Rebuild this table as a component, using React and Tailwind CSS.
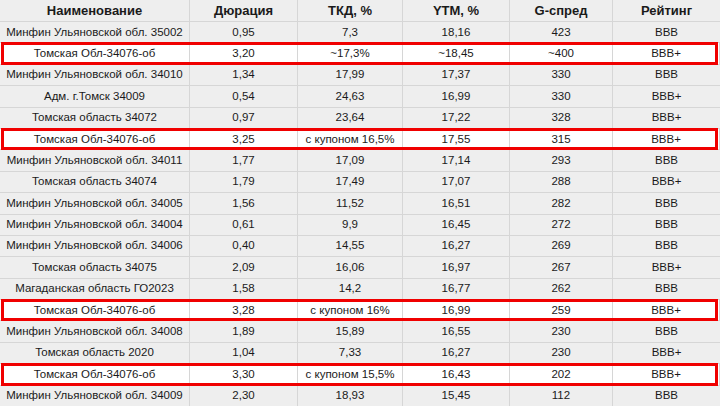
const headers = ["Наименование", "Дюрация", "ТКД, %", "YTM, %", "G-спред", "Рейтинг"];

const rows = [
  ["Минфин Ульяновской обл. 35002", "0,95", "7,3", "18,16", "423", "BBB"],
  ["Томская Обл-34076-об", "3,20", "~17,3%", "~18,45", "~400", "BBB+", true],
  ["Минфин Ульяновской обл. 34010", "1,34", "17,99", "17,37", "330", "BBB"],
  ["Адм. г.Томск 34009", "0,54", "24,63", "16,99", "330", "BBB+"],
  ["Томская область 34072", "0,97", "23,64", "17,22", "328", "BBB+"],
  ["Томская Обл-34076-об", "3,25", "с купоном 16,5%", "17,55", "315", "BBB+", true],
  ["Минфин Ульяновской обл. 34011", "1,77", "17,09", "17,14", "293", "BBB"],
  ["Томская область 34074", "1,79", "17,49", "17,07", "288", "BBB+"],
  ["Минфин Ульяновской обл. 34005", "1,56", "11,52", "16,51", "282", "BBB"],
  ["Минфин Ульяновской обл. 34004", "0,61", "9,9", "16,45", "272", "BBB"],
  ["Минфин Ульяновской обл. 34006", "0,40", "14,55", "16,27", "269", "BBB"],
  ["Томская область 34075", "2,09", "16,06", "16,97", "267", "BBB+"],
  ["Магаданская область ГО2023", "1,58", "14,2", "16,77", "262", "BBB"],
  ["Томская Обл-34076-об", "3,28", "с купоном 16%", "16,99", "259", "BBB+", true],
  ["Минфин Ульяновской обл. 34008", "1,89", "15,89", "16,55", "230", "BBB"],
  ["Томская область 2020", "1,04", "7,33", "16,27", "230", "BBB+"],
  ["Томская Обл-34076-об", "3,30", "с купоном 15,5%", "16,43", "202", "BBB+", true],
  ["Минфин Ульяновской обл. 34009", "2,30", "18,93", "15,45", "112", "BBB"],
];

const cols = "grid grid-cols-[190px_108px_105px_107px_103px_1fr]";

export default function App() {
  return (
    <div className="w-[720px] h-[406px] overflow-hidden bg-white text-[#1a1a1a] font-['Liberation_Sans',Arial,sans-serif]">
      <div className={`${cols} h-[22px] bg-[#eeeeee] border-b border-[#d6d6d6]`}>
        {headers.map((h) => (
          <div
            key={h}
            className="flex items-center justify-center text-[13px] font-bold border-r border-[#d6d6d6] last:border-r-0"
          >
            {h}
          </div>
        ))}
      </div>

      {rows.map((r, i) => {
        const marked = r[6];
        return (
          <div
            key={i}
            className={`relative ${cols} h-[21.4px] border-b border-[#d6d6d6] ${marked ? "bg-white" : "bg-[#eeeeee]"}`}
          >
            {r.slice(0, 6).map((c, j) => (
              <div
                key={j}
                className="flex items-center justify-center text-[11.5px] whitespace-nowrap border-r border-[#d6d6d6] last:border-r-0"
              >
                {c}
              </div>
            ))}
            {marked && (
              <div className="absolute left-[1px] right-[2px] top-[-1px] bottom-[-1px] border-[3px] border-[#f00000]" />
            )}
          </div>
        );
      })}
    </div>
  );
}
